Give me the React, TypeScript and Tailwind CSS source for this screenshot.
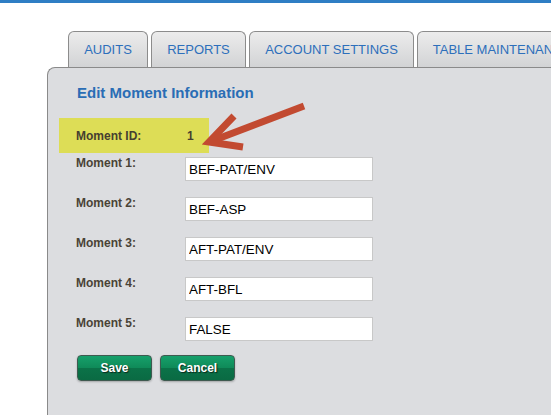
import React from "react"

const tabs = [
  { label: "AUDITS", width: "w-[80px]" },
  { label: "REPORTS", width: "w-[95px]" },
  { label: "ACCOUNT SETTINGS", width: "w-[165px]" },
  { label: "TABLE MAINTENANCE", width: "w-[170px]" },
]

const moments = ["BEF-PAT/ENV", "BEF-ASP", "AFT-PAT/ENV", "AFT-BFL", "FALSE"]

function GreenButton({ children }: { children: React.ReactNode }) {
  return (
    <button className="w-[75px] h-[26px] rounded-[4px] border border-[#3f5a50] bg-[linear-gradient(#16a06b,#0f8a58_50%,#0b7248_52%,#0a6a43)] text-white text-[12px] font-bold [text-shadow:1px_1px_1px_#0a2a1c] shadow-[0_1px_2px_rgba(0,0,0,0.25)]">
      {children}
    </button>
  )
}

export default function App() {
  return (
    <div className="relative w-[551px] h-[415px] overflow-hidden bg-white font-['Liberation_Sans',Arial,sans-serif]">
      <div className="h-[3px] bg-[#2f7ec4]" />

      {/* tabs */}
      <div className="flex gap-[3px] pl-[68px] pt-[28px] whitespace-nowrap">
        {tabs.map((t) => (
          <div
            key={t.label}
            className={`${t.width} shrink-0 h-[36px] flex items-center justify-center rounded-t-[6px] border border-b-0 border-[#8c8c8c] bg-[linear-gradient(#ececec,#d2d3d5)] text-[13px] text-[#2d6fbb]`}
          >
            {t.label}
          </div>
        ))}
      </div>

      {/* panel */}
      <div className="ml-[47px] w-[560px] h-[360px] rounded-tl-[8px] border-l border-t border-[#8a8a8a] bg-[#dcdde0] pt-[16px]">
        <div className="pl-[29px] text-[15px] leading-[18px] font-bold text-[#2a6db5]">Edit Moment Information</div>

        <div className="ml-[11px] mt-[16px] w-[150px] h-[35px] bg-[#dddd56] flex items-center pl-[17px] text-[12px] font-bold text-[#463f30]">
          <span className="w-[111px]">Moment ID:</span>
          <span>1</span>
        </div>

        <div className="mt-[4px] pl-[28px] flex flex-col gap-[16px]">
          {moments.map((m, i) => (
            <div key={i} className="flex items-start">
              <div className="w-[109px] text-[12px] leading-[14px] font-bold text-[#4a4336] -mt-[1px]">Moment {i + 1}:</div>
              <input
                type="text"
                defaultValue={m}
                className="w-[188px] h-[24px] border border-[#c8c8c8] bg-white px-[3px] text-[13.4px] text-black outline-none font-['Liberation_Sans',Arial,sans-serif]"
              />
            </div>
          ))}
        </div>

        <div className="mt-[14px] pl-[29px] flex gap-[8px]">
          <GreenButton>Save</GreenButton>
          <GreenButton>Cancel</GreenButton>
        </div>
      </div>

      {/* annotation arrow */}
      <svg className="absolute left-0 top-0 pointer-events-none" width="551" height="415">
        <g stroke="#c24a31" strokeWidth="7" fill="none" strokeLinejoin="miter">
          <line x1="304" y1="106" x2="212" y2="141" />
          <polyline points="234,116 209,142 243,147" />
        </g>
      </svg>
    </div>
  )
}
